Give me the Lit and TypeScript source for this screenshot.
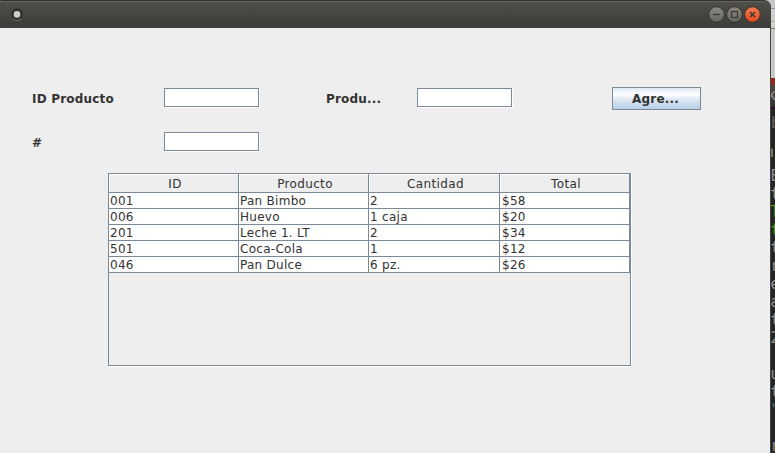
import { LitElement, html, css } from "lit";
import { customElement } from "lit/decorators.js";

@customElement("title-bar")
class TitleBar extends LitElement {
  static styles = css`
    :host { display: flex; align-items: center; justify-content: space-between; height: 28px; box-sizing: border-box;
      padding: 0 9px 0 10px; border-top: 1px solid #33322e; border-radius: 1px 7px 0 0;
      background: linear-gradient(#64635d 0, #64635d 1px, #4f4e48 1px, #3c3b37 100%); }
    svg { display: block; }
  `;
  render() {
    return html`
      <svg width="14" height="14" viewBox="0 0 14 14">
        <circle cx="7" cy="7.2" r="5.6" fill="#85837c" />
        <circle cx="7" cy="6.2" r="6" fill="#302f2c" />
        <circle cx="7" cy="6.4" r="3.3" fill="#cfcbc5" />
      </svg>
      <svg width="54" height="18" viewBox="0 0 54 18">
        <defs>
          <linearGradient id="g" x1="0" y1="0" x2="0" y2="1"><stop offset="0" stop-color="#8c8b83" /><stop offset="1" stop-color="#65645d" /></linearGradient>
          <linearGradient id="r" x1="0" y1="0" x2="0" y2="1"><stop offset="0" stop-color="#f67b52" /><stop offset="1" stop-color="#e5481b" /></linearGradient>
        </defs>
        <g stroke="#33322e" stroke-width="1">
          <circle cx="8.5" cy="8.5" r="7.8" fill="url(#g)" />
          <circle cx="26.5" cy="8.5" r="7.8" fill="url(#g)" />
          <circle cx="44.5" cy="8.5" r="7.8" fill="url(#r)" />
        </g>
        <g fill="none" stroke="#3a3935">
          <path d="M5 8.5H12" stroke-width="1.2" />
          <rect x="23.5" y="5.5" width="6" height="6" stroke-width="1.2" />
          <path d="M42 6L47 11M47 6L42 11" stroke-width="1.5" />
        </g>
      </svg>`;
  }
}

@customElement("text-field")
class TextField extends LitElement {
  static styles = css`
    :host { display: block; width: 95px; height: 19px; box-sizing: border-box; background: #fff;
      border: 1px solid #7a8a99; box-shadow: 1px 1px 0 #fff; }
  `;
  render() { return html``; }
}

@customElement("product-table")
class ProductTable extends LitElement {
  static styles = css`
    :host { display: block; width: 523px; height: 193px; box-sizing: border-box; border: 1px solid #7a8a99;
      box-shadow: 1px 1px 0 #fff; font: 12px "DejaVu Sans", sans-serif; color: #333; }
    .row { display: grid; grid-template-columns: 130px 130px 131px 130px; grid-template-rows: 16px; }
    .row > div { box-sizing: border-box; border-right: 1px solid #7a8a99; border-bottom: 1px solid #7a8a99;
      background: #fff; padding-left: 1px; line-height: 16px; white-space: pre; letter-spacing: 0.28px; }
    .row > div:last-child { padding-left: 2px; }
    .head { grid-template-rows: 19px; }
    .head > div, .head > div:last-child { padding: 1px 0 0 3px; text-align: center; line-height: 18px; background: #eee;
      box-shadow: inset 1px 1px 0 #fff; letter-spacing: 0.35px; }
  `;
  private columns = ["ID", "Producto", "Cantidad", "Total"];
  private rows = [
    ["001", "Pan Bimbo", "2", "$58"],
    ["006", "Huevo", "1 caja", "$20"],
    ["201", "Leche 1. LT", "2", "$34"],
    ["501", "Coca-Cola", "1", "$12"],
    ["046", "Pan Dulce", "6 pz.", "$26"],
  ];
  render() {
    return html`<div class="row head">${this.columns.map((c) => html`<div>${c}</div>`)}</div>
      ${this.rows.map((r) => html`<div class="row">${r.map((c) => html`<div>${c}</div>`)}</div>`)}`;
  }
}

@customElement("terminal-edge")
class TerminalEdge extends LitElement {
  static styles = css`
    :host { display: block; width: 4px; height: 453px; overflow: hidden; background: #252624;
      font: 15px "DejaVu Sans Mono", monospace; color: #8e9294; }
    .sky { height: 78px; background: linear-gradient(#c8c8c8 0 8px, #8b93a3 8px 9px, #cfcfcf 9px 21px, #aaa 21px 22px, #d0d0d0 22px 28px, #8a7868 28px 29px, #c9c9c9 29px); }
    .red { height: 7px; background: #96281c; }
    .tab { height: 22px; line-height: 21px; background: linear-gradient(#4a4946, #333230); border-bottom: 2px solid #2c0a22; text-indent: -4px; }
    .line { height: 18px; line-height: 18px; text-indent: -0.5px; }
    .quote { text-indent: -2px; color: #3f6c94; }
    .dim { height: 29px; line-height: 29px; color: #66625c; }
    .shift { text-indent: -6px; color: #8e9294; }
    .green { color: #4e9a1c; }
  `;
  private lines = ["E", "t", "T", "t", "t", "r", "e", "a", "t", "2", "", "u", "t", "'", "", "r"];
  render() {
    return html`<div class="sky"></div><div class="red"></div><div class="tab">x</div>
      <div class="dim">b</div><div class="dim shift">n</div>
      ${this.lines.map((l, i) => html`<div class="line ${i === 2 || i === 3 ? "green" : l === "'" ? "quote" : ""}">${l}</div>`)}`;
  }
}

@customElement("app-root")
class AppRoot extends LitElement {
  static styles = css`
    :host { display: flex; width: 775px; height: 453px; overflow: hidden; background: #c8c8c8; }
    .window { width: 771px; height: 453px; flex: none; }
    .body { height: 425px; box-sizing: border-box; padding: 59px 0 0 32px; background: #eee; border-right: 1px solid #45443f;
      font: bold 12px "DejaVu Sans", sans-serif; color: #333; letter-spacing: 0.2px; }
    .form { display: grid; grid-template-columns: 132px 162px 91px 195px 89px; height: 86px;
      grid-template-rows: 23px 23px; row-gap: 21px; align-items: center; }
    text-field { margin-top: -2px; }
    .add { height: 23px; box-sizing: border-box; border: 1px solid #7a8a99; padding: 0 2px 0 0; text-align: center;
      line-height: 22px; background: linear-gradient(#dde8f3, #fff 30%, #dde8f3 55%, #b8cfe5); }
    product-table { margin-left: 76px; }
  `;
  render() {
    return html`<div class="window">
        <title-bar></title-bar>
        <div class="body">
          <div class="form">
            <span>ID Producto</span><text-field></text-field>
            <span>Produ...</span><text-field></text-field>
            <div class="add">Agre...</div>
            <span>#</span><text-field></text-field>
          </div>
          <product-table></product-table>
        </div>
      </div>
      <terminal-edge></terminal-edge>`;
  }
}
